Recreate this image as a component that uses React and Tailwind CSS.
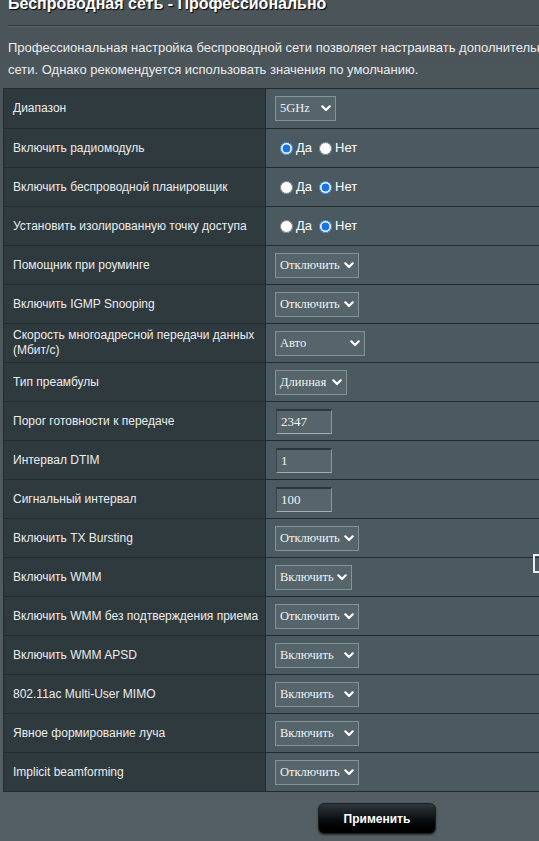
import React from "react";

const rows = [
  { label: "Диапазон", type: "select", value: "5GHz", w: "w-[61px]" },
  { label: "Включить радиомодуль", type: "radio", on: true },
  { label: "Включить беспроводной планировщик", type: "radio", on: false },
  { label: "Установить изолированную точку доступа", type: "radio", on: false },
  { label: "Помощник при роуминге", type: "select", value: "Отключить", w: "w-[84px]" },
  { label: "Включить IGMP Snooping", type: "select", value: "Отключить", w: "w-[84px]" },
  { label: "Скорость многоадресной передачи данных (Мбит/с)", type: "select", value: "Авто", w: "w-[90px]" },
  { label: "Тип преамбулы", type: "select", value: "Длинная", w: "w-[72px]" },
  { label: "Порог готовности к передаче", type: "input", value: "2347" },
  { label: "Интервал DTIM", type: "input", value: "1" },
  { label: "Сигнальный интервал", type: "input", value: "100" },
  { label: "Включить TX Bursting", type: "select", value: "Отключить", w: "w-[84px]" },
  { label: "Включить WMM", type: "select", value: "Включить", w: "w-[77px]", mark: true },
  { label: "Включить WMM без подтверждения приема", type: "select", value: "Отключить", w: "w-[84px]" },
  { label: "Включить WMM APSD", type: "select", value: "Включить", w: "w-[84px]" },
  { label: "802.11ac Multi-User MIMO", type: "select", value: "Включить", w: "w-[84px]" },
  { label: "Явное формирование луча", type: "select", value: "Включить", w: "w-[84px]" },
  { label: "Implicit beamforming", type: "select", value: "Отключить", w: "w-[84px]" },
];

const Chevron = () => (
  <svg width="10" height="7" viewBox="0 0 10 7" className="shrink-0">
    <path d="M1.3 1.3 L5 5 L8.7 1.3" fill="none" stroke="#fff" strokeWidth="2.2" strokeLinecap="round" strokeLinejoin="round" />
  </svg>
);

const FakeSelect = ({ value, w }) => (
  <div
    className={`${w} h-[25px] flex items-center justify-between pl-[4px] pr-[4px] bg-[#55656b] border border-[#84939a] text-[12.5px] text-[#f2f2f2] font-['Liberation_Serif',serif] whitespace-nowrap overflow-hidden`}
  >
    <span>{value}</span>
    <Chevron />
  </div>
);

const Radio = ({ on }) => (
  <div className="flex items-center text-[13px] text-white font-['Liberation_Sans',sans-serif] ml-[5px]">
    <input type="radio" readOnly checked={on} className="w-[13px] h-[13px] m-0 mr-[3px] accent-[#1a73e8]" />
    <span className="mr-[7px]">Да</span>
    <input type="radio" readOnly checked={!on} className="w-[13px] h-[13px] m-0 mr-[3px] accent-[#1a73e8]" />
    <span>Нет</span>
  </div>
);

const TextBox = ({ value }) => (
  <div className="w-[56px] h-[25px] ml-[1px] flex items-center pl-[4px] bg-[#56656b] border-t-2 border-l border-t-[#2c373b] border-l-[#3a474b] border-b border-r border-b-[#a3afb3] border-r-[#8a979c] text-[13px] text-[#f2f2f2] font-['Liberation_Serif',serif]">
    {value}
  </div>
);

export default function App() {
  return (
    <div className="w-[539px] h-[841px] overflow-hidden bg-gradient-to-b from-[#4a5459] to-[#535f64] font-['Liberation_Sans',sans-serif]">
      <div className="w-[780px]">
        <div className="pl-[8px] mt-[-6px] h-[20px] leading-[20px] text-[16px] font-bold text-white [text-shadow:1px_1px_1px_#000]">
          Беспроводная сеть - Профессионально
        </div>
        <div className="ml-[8px] mt-[11px] h-[2px] border-t border-t-[#2b3337] border-b border-b-[#5b666b]"></div>
        <div className="pl-[8px] mt-[10px] text-[13px] leading-[22px] text-[#ececec] whitespace-nowrap">
          Профессиональная настройка беспроводной сети позволяет настраивать дополнительные параметры беспроводной
          <br />
          сети. Однако рекомендуется использовать значения по умолчанию.
        </div>
        <div className="ml-[3px] mt-[7px] w-[760px] border border-[#222b2e] relative">
          {rows.map((r, i) => (
            <div
              key={i}
              className={`grid grid-cols-[262px_1fr] h-[39px] ${i > 0 ? "border-t border-t-[#222b2e]" : ""}`}
            >
              <div className="bg-[#2f3a3e] border-r border-r-[#222b2e] flex items-center pl-[9px] pr-[4px] text-[12px] leading-[15px] text-[#ececec]">
                {r.label}
              </div>
              <div className="bg-[#4b5a60] flex items-center pl-[9px] relative">
                {r.type === "select" && <FakeSelect value={r.value} w={r.w} />}
                {r.type === "radio" && <Radio on={r.on} />}
                {r.type === "input" && <TextBox value={r.value} />}
                {r.mark && (
                  <div className="absolute left-[267px] top-[-4px] w-[8px] h-[19px] border-2 border-[#e8eef0]"></div>
                )}
              </div>
            </div>
          ))}
        </div>
        <div className="ml-[3px] w-[748px] flex justify-center mt-[11px]">
          <button className="w-[118px] h-[31px] rounded-[6px] border border-[#1a1f21] bg-gradient-to-b from-[#2e373b] via-[#0e1214] to-[#000000] text-white text-[12px] font-bold shadow-[0_1px_2px_rgba(0,0,0,0.5)]">
            Применить
          </button>
        </div>
      </div>
    </div>
  );
}
